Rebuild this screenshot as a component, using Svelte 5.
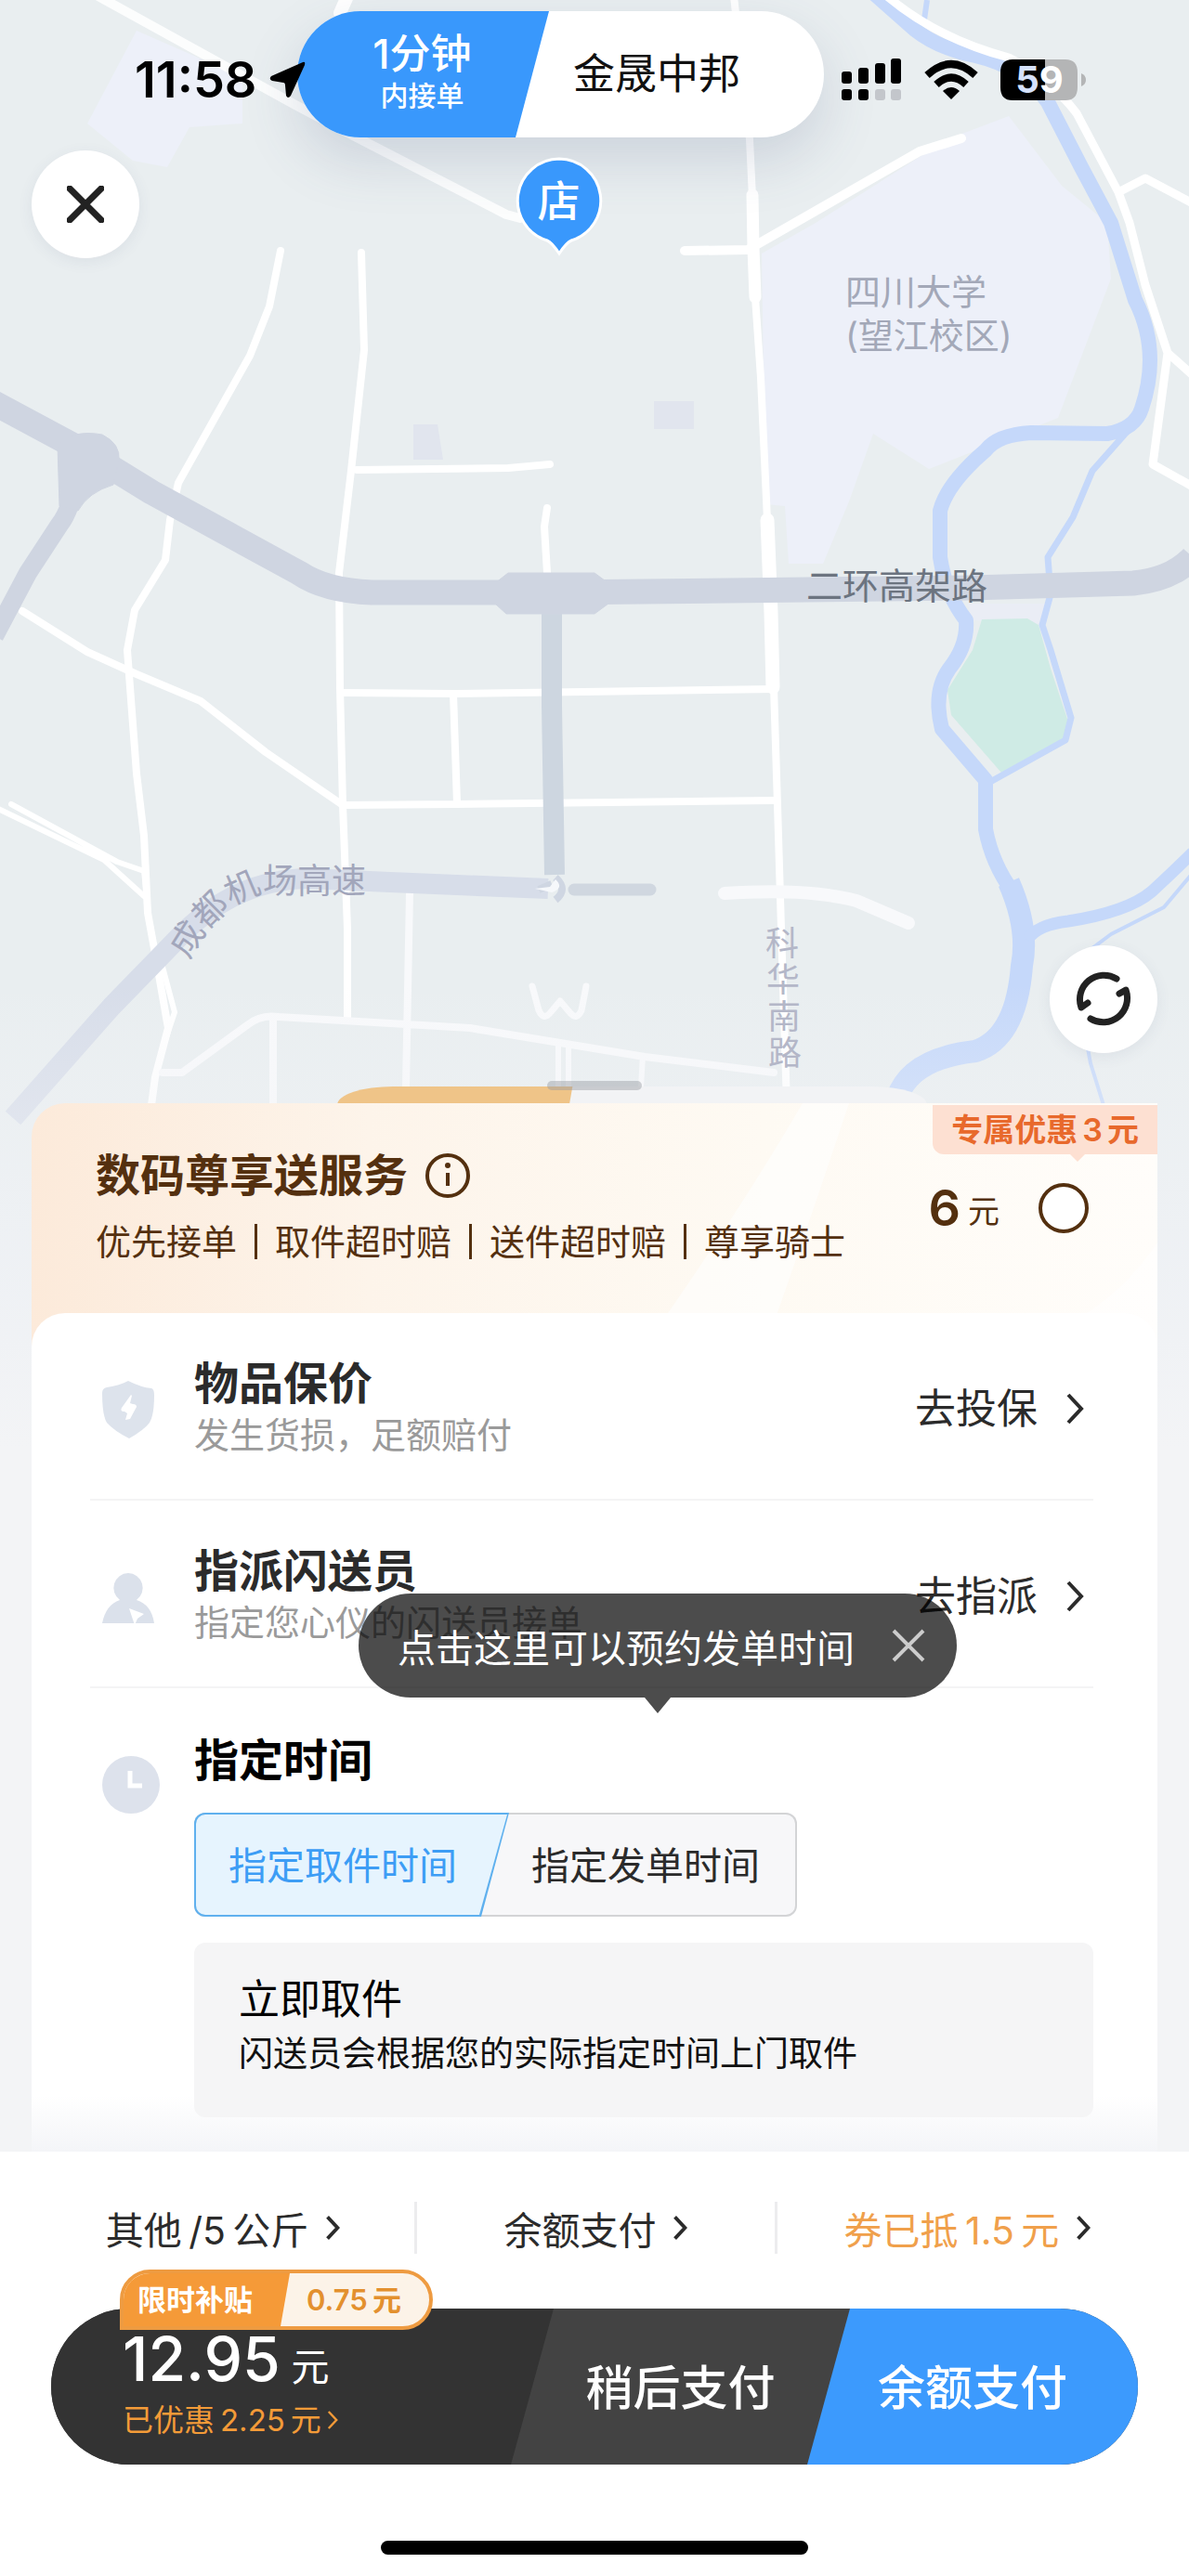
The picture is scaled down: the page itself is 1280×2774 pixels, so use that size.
<script lang="ts">
  interface ServiceRow {
    icon: 'shield' | 'courier';
    title: string;
    note: string;
    action: string;
  }

  const perks = ['优先接单', '取件超时赔', '送件超时赔', '尊享骑士'];

  const services: ServiceRow[] = [
    { icon: 'shield', title: '物品保价', note: '发生货损，足额赔付', action: '去投保' },
    { icon: 'courier', title: '指派闪送员', note: '指定您心仪的闪送员接单', action: '去指派' }
  ];

  const timeTabs = ['指定取件时间', '指定发单时间'];

  let activeTab = $state(0);
  let showTip = $state(true);
</script>

{#snippet chevron()}
  <svg class="chevron" viewBox="0 0 20 36" aria-hidden="true">
    <path d="M3 3 L17 18 L3 33" />
  </svg>
{/snippet}

<div class="page">
  <section class="stage">
    <svg class="map" viewBox="0 0 1280 1560" aria-hidden="true">
      <defs>
        <linearGradient id="fade" x1="0" y1="0" x2="0" y2="1">
          <stop offset="0" stop-color="#f3f4f7" stop-opacity="0" />
          <stop offset="0.6" stop-color="#f0f2f6" stop-opacity="0.75" />
          <stop offset="1" stop-color="#f3f4f6" />
        </linearGradient>
        <path id="airport" d="M203 1034 Q240 965 290 962 L420 962" />
      </defs>
      <rect width="1280" height="1560" fill="#e9eef0" />

      <!-- campus and blocks -->
      <g fill="#edf0f9">
        <path d="M820 273 L878 240 L1020 150 L1086 125 L1143 200 L1192 240 L1196 300 L1139 450 L1000 505 L940 467 L914 540 L886 607 L849 607 L845 545 L824 543 Z" />
        <path d="M147 33 L261 83 L261 133 L204 137 L180 180 L143 173 L94 133 Z" />
      </g>
      <path d="M704 432h43v30h-43z M445 457h26l6 38h-32z" fill="#e1e5ee" />
      <path d="M1042 650 L1126 650 L1120 672 L1046 668 Z" fill="#eaedf5" />
      <path d="M1057 667 L1106 666 L1118 673 L1131 720 L1150 777 L1145 797 L1078 832 L1024 770 L1020 743 L1047 700 Z" fill="#cfebe5" />

      <!-- river -->
      <g fill="none" stroke="#c5d8fa" stroke-linejoin="round">
        <path stroke-width="16" d="M942 -6 L985 32 Q1010 52 1050 60 Q1102 72 1128 110 L1164 180 L1196 240 L1222 323 Q1250 378 1229 440 Q1222 462 1192 467 L1110 466 Q1074 468 1061 485 Q1020 520 1012 550 L1012 600 Q1018 640 1040 668 Q1042 695 1022 720 Q1004 745 1014 785 L1061 840 L1061 893 Q1068 930 1090 960" />
        <path stroke-width="24" d="M1086 950 Q1108 1000 1100 1040 Q1094 1118 1050 1132 Q980 1140 966 1182" />
        <path stroke-width="7" d="M1222 455 L1176 507 L1155 557 L1128 600 L1131 640 L1122 673 L1131 700 L1153 773 L1147 797 L1066 842" />
        <path stroke-width="13" d="M1106 1012 Q1116 996 1150 992 Q1214 982 1240 960 Q1266 936 1284 918" />
        <path stroke-width="4" d="M1284 940 L1253 977 L1196 1006 L1172 1024 M1170 1124 L1174 1145 L1188 1190" />
        <path stroke-width="6" d="M998 0 L994 28" />
      </g>

      <!-- streets -->
      <g fill="none" stroke="#fff" stroke-width="8" stroke-linejoin="round" stroke-linecap="round">
        <path stroke-width="10" d="M106 -4 L318 113 L384 148 L545 231 L560 235" opacity="0.85" />
        <path stroke-width="14" d="M374 -4 L366 14" />
        <path stroke-width="8" d="M790 -4 L807 150 L810 213" />
        <path stroke-width="13" d="M810 210 L811 267 L813 320" />
        <path d="M813 320 L819 407 L826 560" />
        <path stroke-width="15" d="M826 560 L830 660 L832 740" />
        <path d="M833 740 L837 867 L841 1000 L847 1190" />
        <path stroke-width="10" d="M737 270 L805 269 L990 163 L1035 149" />
        <path stroke-width="9" d="M955 -4 Q1010 42 1086 62 Q1130 84 1159 122 L1204 207 L1216 240 L1233 307 L1257 380 L1241 500 L1284 524 M1257 380 L1284 404 M1204 207 L1233 192 L1284 219" />
        <path d="M302 270 L290 330 L269 383 L192 520 L183 560 L178 603 L145 657 L137 700 L147 833 L155 900 L159 983 L167 1027 L181 1107 L167 1160 L163 1190" />
        <path d="M389 272 L392 377 L378 507 L365 617 L366 740 L369 867 L374 1000 L374 1097" />
        <path d="M384 506 L547 504 L592 500 M589 547 L586 567 L589 617 M371 746 L490 747 L833 742 M371 867 L490 866 L833 862 M488 747 L492 865" />
        <path d="M24 658 L94 702 L147 726 L216 755 L286 810 L369 867" />
        <path stroke-width="6" d="M-4 870 L112 926 L155 965 M12 866 L126 928 L155 938 L160 985 M172 1030 L188 1090 L178 1120" />
        <g stroke="#f8f9fb">
          <path d="M175 1155 L196 1155 L266 1104 Q280 1092 300 1095 L506 1107 L694 1138 L833 1155 M294 1095 L294 1190 M441 962 L437 1170" />
          <path stroke-width="6" d="M601 1125 L601 1170 M612 1125 L612 1170 M692 1137 L690 1170" />
          <path stroke-width="14" d="M780 962 Q870 956 922 970 L978 994" />
          <path stroke-width="7" d="M573 1062 L580 1088 Q585 1099 592 1091 L603 1078 L614 1091 Q621 1099 626 1088 L631 1062" />
        </g>
      </g>

      <!-- elevated roads -->
      <g fill="none" stroke="#cfd5e1" stroke-linejoin="round">
        <path stroke-width="27" d="M-10 432 L98 490 L163 530 L322 617 Q350 636 400 638 L600 638 L1045 633 L1220 628 Q1262 624 1284 600" />
        <path stroke-width="20" d="M88 485 Q80 545 64 565 L30 617 L-6 685" />
        <path stroke-width="22" stroke="#cdd6e0" d="M594 650 L594 760 L597 942" />
        <path d="M62 480 Q78 462 110 468 Q130 478 128 496 L122 522 Q95 530 84 550 L64 545 Z" fill="#cfd5e1" />
        <path d="M547 617 L640 617 L655 628 L655 650 L640 661 L545 661 L533 650 L533 628 Z" fill="#cfd5e1" />
      </g>
      <g fill="none" stroke="#d7dde9" stroke-linejoin="round">
        <path stroke-width="22" d="M14 1204 L120 1084 L190 1012 Q250 948 330 946 L420 950 L590 957" />
        <path stroke-width="13" stroke="#d0d7e0" stroke-linecap="round" d="M618 958 L700 958" />
        <path d="M580 958 L594 952 M598 945 Q612 958 598 969" stroke="#cfd6e2" stroke-width="8" />
        <path d="M576 957 L592 955 L598 947 Q608 956 594 961 Z" fill="#f6f8fb" stroke="none" />
      </g>

      <rect y="1060" width="1280" height="500" fill="url(#fade)" />

      <g class="labels">
        <text x="910" y="328">四川大学</text>
        <text x="910" y="375">(望江校区)</text>
        <text class="strong" x="868" y="645">二环高架路</text>
        <text class="road"><textPath href="#airport">成都机场高速</textPath></text>
        <text class="soft" x="824 825 826 827" y="1029 1068 1108 1147">科华南路</text>
      </g>
    </svg>

    <div class="eta">
      <div class="eta-time">
        <strong>1分钟</strong>
        <span>内接单</span>
      </div>
      <div class="eta-place">金晟中邦</div>
    </div>

    <div class="pin">
      <svg viewBox="0 0 96 108" aria-hidden="true">
        <path d="M48 3 A45 45 0 0 1 61 91 Q56 93 48 105 Q40 93 35 91 A45 45 0 0 1 48 3 Z" fill="#3998fc" stroke="#fff" stroke-width="3" />
      </svg>
      <span>店</span>
    </div>

    <div class="status">
      <div class="status-left">
        <span class="clock">11:58</span>
        <svg class="arrow" viewBox="0 0 42 42" aria-hidden="true">
          <path d="M38 2 L4 17 Q1 20 5 22 L17 24 Q19 24 19 27 L20 38 Q22 42 25 38 L40 5 Q41 1 38 2 Z" />
        </svg>
      </div>
      <div class="status-right">
        <svg class="signal" viewBox="0 0 66 46" aria-hidden="true">
          <rect x="0" y="14" width="11" height="13" rx="3" />
          <rect x="18" y="10" width="11" height="17" rx="3" />
          <rect x="36" y="5" width="11" height="22" rx="3" />
          <rect x="53" y="0" width="11" height="27" rx="3" />
          <rect x="0" y="33" width="11" height="12" rx="3" />
          <rect x="18" y="33" width="11" height="12" rx="3" />
          <rect x="36" y="33" width="11" height="12" rx="3" fill="#c3c6cb" />
          <rect x="53" y="33" width="11" height="12" rx="3" fill="#c3c6cb" />
        </svg>
        <svg class="wifi" viewBox="0 0 58 44" aria-hidden="true">
          <path d="M3 17 Q29 -7 55 17" stroke-width="8" />
          <path d="M13 27 Q29 12 45 27" stroke-width="8" />
          <path d="M20 34 Q29 26 38 34 L29 43 Z" fill="#000" stroke="none" />
        </svg>
        <svg class="battery" viewBox="0 0 94 46" aria-hidden="true">
          <path d="M14 1 H49 V45 H14 Q1 45 1 31 V15 Q1 1 14 1 Z" />
          <path d="M49 1 H71 Q84 1 84 15 V31 Q84 45 71 45 H49 Z" fill="#b4b5b6" />
          <path d="M88 16 Q93 18 93 23 Q93 28 88 30 Z" fill="#b4b5b6" />
          <text x="43" y="37" text-anchor="middle"><tspan fill="#d5e1fb">5</tspan><tspan fill="#fff">9</tspan></text>
        </svg>
      </div>
    </div>

    <button class="round close" aria-label="关闭">
      <svg viewBox="0 0 40 40" aria-hidden="true"><path d="M3 3 L37 37 M37 3 L3 37" /></svg>
    </button>

    <button class="round refresh" aria-label="刷新">
      <svg viewBox="0 0 60 60" aria-hidden="true">
        <path d="M44 8 A26 26 0 0 0 6 39 L13 34" />
        <path d="M16 51 A26 26 0 0 0 54 20 L47 24" />
      </svg>
    </button>

    <div class="peek"></div>
    <div class="handle"></div>
  </section>

  <main class="sheet">
    <section class="promo">
      <svg class="shine" viewBox="0 0 1212 262" preserveAspectRatio="none" aria-hidden="true">
        <path d="M830 0 H880 Q830 150 790 262 H660 Q760 120 830 0 Z" />
        <path d="M1212 150 V262 H1050 Q1150 240 1212 150 Z" />
      </svg>
      <div class="promo-badge">专属优惠<b>3</b>元</div>
      <div class="promo-info">
        <h2>
          数码尊享送服务
          <svg viewBox="0 0 50 50" aria-hidden="true">
            <circle cx="25" cy="25" r="22" />
            <path d="M25 22 V36" />
            <circle class="dot" cx="25" cy="14" r="3" />
          </svg>
        </h2>
        <ul>
          {#each perks as perk}
            <li>{perk}</li>
          {/each}
        </ul>
      </div>
      <label class="promo-price">
        <b>6</b>
        <span>元</span>
        <input type="radio" name="premium" />
      </label>
    </section>

    <section class="card">
      {#each services as row}
        <div class="row">
          <div class="icon">
            {#if row.icon === 'shield'}
              <svg viewBox="0 0 64 64" aria-hidden="true">
                <path d="M29 1 Q43 8 54 9 Q57 10 57 16 Q57 38 52 46 Q46 54 30 63 Q14 55 6 46 Q1 38 1 14 Q1 9 6 8 Q20 6 29 1 Z" fill="#dde3ec" />
                <path d="M32 16 L22 30 Q20 34 25 34 L28 36 L26 43 L31 42 L38 29 Q38 26 34 26 L31 25 L33 17 Z" fill="#fff" />
              </svg>
            {:else}
              <svg viewBox="0 0 64 64" aria-hidden="true">
                <path d="M29 6 A16 16 0 0 1 38 35 Q54 40 57 60 H1 Q5 40 20 35 A16 16 0 0 1 29 6 Z" fill="#dbe1eb" />
                <path d="M30 44 L46 50 L39 55 L36 62 Z" fill="#fff" />
              </svg>
            {/if}
          </div>
          <div class="row-text">
            <h3>{row.title}</h3>
            <p>{row.note}</p>
          </div>
          <button class="row-action">
            {row.action}
            {@render chevron()}
          </button>
        </div>
      {/each}

      <div class="row time-row">
        <div class="icon">
          <svg viewBox="0 0 64 64" aria-hidden="true">
            <circle cx="32" cy="32" r="31" fill="#dde2ec" />
            <path d="M31 17 V33 H44" fill="none" stroke="#fff" stroke-width="5" />
          </svg>
        </div>
        <div class="row-text">
          <h3>指定时间</h3>
          <div class="tabs">
            {#each timeTabs as tab, i}
              <button class:active={activeTab === i} onclick={() => (activeTab = i)}>{tab}</button>
            {/each}
          </div>
          <div class="pickup">
            <h4>立即取件</h4>
            <p>闪送员会根据您的实际指定时间上门取件</p>
          </div>
        </div>

        {#if showTip}
          <div class="tip">
            <span>点击这里可以预约发单时间</span>
            <button aria-label="关闭提示" onclick={() => (showTip = false)}>
              <svg viewBox="0 0 36 36" aria-hidden="true"><path d="M2 2 L34 34 M34 2 L2 34" /></svg>
            </button>
          </div>
        {/if}
      </div>
    </section>
  </main>

  <footer class="checkout">
    <div class="options">
      <button>其他&thinsp;/5&thinsp;公斤 {@render chevron()}</button>
      <button>余额支付 {@render chevron()}</button>
      <button class="coupon"><span>券已抵&thinsp;1.5&thinsp;元</span> {@render chevron()}</button>
    </div>

    <div class="bar">
      <div class="total">
        <div class="subsidy">
          <span class="subsidy-name">限时补贴</span>
          <span class="subsidy-sum">0.75&thinsp;元</span>
        </div>
        <div class="sum"><b>12.95</b> 元</div>
        <a class="saved" href="#discount">已优惠&thinsp;2.25&thinsp;元{@render chevron()}</a>
      </div>
      <button class="later">稍后支付</button>
      <button class="pay">余额支付</button>
    </div>

    <div class="home"></div>
  </footer>
</div>

<style>
  :global(body) {
    background: #f3f4f6;
  }

  .page {
    position: relative;
    overflow: hidden;
    font-family: Inter, 'Noto Sans CJK SC', sans-serif;
    color: #2b2b2b;
  }

  .page :is(h2, h3, h4, p, ul) {
    margin: 0;
    padding: 0;
  }

  button {
    border: 0;
    padding: 0;
    background: none;
    font: inherit;
    color: inherit;
    cursor: pointer;
  }

  svg {
    display: block;
  }

  .chevron {
    width: 20px;
    height: 36px;
    fill: none;
    stroke: #2b2b2b;
    stroke-width: 4;
  }

  /* map */
  .stage {
    position: relative;
    aspect-ratio: 1280 / 1188;
  }

  .map {
    position: absolute;
    top: 0;
    left: 0;
    width: 100%;
  }

  .labels {
    font-size: 38px;
    fill: #a3a8b8;
  }

  .labels .strong {
    font-size: 39px;
    fill: #6c7480;
  }

  .labels .road {
    font-size: 37px;
    fill: #a2a6bb;
  }

  .labels .soft {
    font-size: 36px;
    fill: #b4b7c8;
  }

  .status {
    position: absolute;
    top: 56px;
    left: 0;
    right: 0;
    display: flex;
    justify-content: space-between;
    align-items: center;
    height: 60px;
    padding: 0 110px 0 145px;
  }

  .status-left,
  .status-right {
    display: flex;
    align-items: center;
  }

  .status-left {
    gap: 12px;
  }

  .status-right {
    gap: 23px;
  }

  .clock {
    font-size: 54px;
    font-weight: 600;
    line-height: 60px;
    color: #000;
  }

  .arrow {
    width: 42px;
    height: 42px;
  }

  .signal {
    width: 66px;
    height: 46px;
  }

  .wifi {
    width: 58px;
    height: 44px;
    fill: none;
    stroke: #000;
  }

  .battery {
    width: 94px;
    height: 46px;
    overflow: visible;
    font-size: 40px;
    font-weight: 700;
  }

  .eta {
    position: absolute;
    top: 12px;
    left: 25%;
    display: flex;
    height: 136px;
    border-radius: 68px;
    background: #fff;
    box-shadow: 0 24px 60px rgba(70, 90, 130, 0.18);
  }

  .eta-time {
    display: flex;
    flex-direction: column;
    align-items: center;
    justify-content: center;
    width: 271px;
    padding: 0 2px 4px 0;
    box-sizing: border-box;
    border-radius: 68px 0 0 68px;
    background: #3998fc;
    color: #fff;
    clip-path: polygon(0 0, 100% 0, calc(100% - 36px) 100%, 0 100%);
  }

  .eta-time strong {
    font-size: 44px;
    font-weight: 500;
    line-height: 50px;
  }

  .eta-time span {
    font-size: 30px;
    font-weight: 500;
    line-height: 40px;
  }

  .eta-place {
    padding: 0 90px 0 26px;
    font-size: 45px;
    line-height: 136px;
    color: #111;
  }

  .pin {
    position: absolute;
    top: 168px;
    left: 47%;
    width: 96px;
    margin-left: -48px;
    color: #fff;
    font-size: 46px;
    font-weight: 500;
    line-height: 96px;
    text-align: center;
  }

  .pin svg {
    position: absolute;
    top: 0;
    left: 0;
    width: 96px;
    height: 108px;
  }

  .pin span {
    position: relative;
  }

  .round {
    position: absolute;
    display: flex;
    align-items: center;
    justify-content: center;
    width: 116px;
    height: 116px;
    border-radius: 50%;
    background: #fff;
    box-shadow: 0 4px 16px rgba(60, 80, 110, 0.08);
  }

  .round svg {
    fill: none;
    stroke: #222;
    stroke-width: 7;
    stroke-linecap: round;
    stroke-linejoin: round;
  }

  .close {
    top: 162px;
    left: 34px;
  }

  .close svg {
    width: 40px;
    height: 40px;
  }

  .refresh {
    right: 34px;
    bottom: 54px;
  }

  .refresh svg {
    width: 60px;
    height: 60px;
  }

  .peek {
    position: absolute;
    right: 22%;
    bottom: -2px;
    left: 363px;
    height: 20px;
    border-radius: 60px 60px 0 0 / 20px 20px 0 0;
    background: linear-gradient(100deg, #efc488 249px, #f2f3f5 250px);
  }

  .handle {
    position: absolute;
    bottom: 14px;
    left: 50%;
    width: 102px;
    height: 10px;
    margin-left: -51px;
    border-radius: 5px;
    background: rgba(150, 156, 162, 0.45);
  }

  /* sheet */
  .sheet {
    position: relative;
    margin: 0 34px;
  }

  .promo {
    position: relative;
    display: flex;
    justify-content: space-between;
    align-items: flex-start;
    padding: 46px 74px 84px 69px;
    border-radius: 36px 0 0 0;
    background: linear-gradient(90deg, #fceada 0%, #fdf4ea 30%, #fefaf3 65%, #fffdfa 100%);
    color: #54300f;
  }

  .shine {
    position: absolute;
    inset: 0;
    width: 100%;
    height: 100%;
    fill: #fff;
    opacity: 0.6;
  }

  .promo-badge {
    position: absolute;
    top: 2px;
    right: 0;
    padding: 0 20px;
    border-radius: 0 0 0 12px;
    background: #fde0d2;
    color: #e8692c;
    font-size: 34px;
    font-weight: 700;
    line-height: 53px;
  }

  .promo-badge b {
    margin: 0 5px;
    font-weight: 600;
  }

  .promo-badge::after {
    content: '';
    position: absolute;
    top: 100%;
    right: 78px;
    border: 8px solid transparent;
    border-top-color: #fde0d2;
    border-bottom: 0;
  }

  .promo-info,
  .promo-price {
    position: relative;
  }

  .promo-info h2 {
    display: flex;
    align-items: center;
    gap: 18px;
    font-size: 48px;
    font-weight: 700;
    line-height: 64px;
  }

  .promo-info h2 svg {
    width: 50px;
    height: 50px;
    fill: none;
    stroke: #54300f;
    stroke-width: 4;
  }

  .promo-info .dot {
    fill: #54300f;
    stroke: none;
  }

  .promo-info ul {
    display: flex;
    margin-top: 10px;
    list-style: none;
    font-size: 38px;
    line-height: 58px;
  }

  .promo-info li + li {
    display: flex;
    align-items: center;
  }

  .promo-info li + li::before {
    content: '';
    width: 3px;
    height: 38px;
    margin: 0 19px;
    background: #54300f;
  }

  .promo-price {
    display: flex;
    align-items: center;
    margin-top: 37px;
    line-height: 60px;
  }

  .promo-price b {
    font-size: 54px;
    font-weight: 600;
  }

  .promo-price span {
    margin: 8px 42px 0 8px;
    font-size: 34px;
    line-height: 52px;
  }

  .promo-price input {
    appearance: none;
    width: 54px;
    height: 54px;
    margin: 0;
    border: 4px solid #54300f;
    border-radius: 50%;
    background: #fff;
  }

  .promo-price input:checked {
    box-shadow: inset 0 0 0 10px #fff;
    background: #54300f;
  }

  .card {
    position: relative;
    margin-top: -36px;
    padding: 0 69px 37px 63px;
    border-radius: 36px 36px 0 0;
    background: linear-gradient(to top, #f4f5f8, #fff 60px);
  }

  .row {
    position: relative;
    display: flex;
    align-items: flex-start;
    padding: 48px 0 42px 12px;
    border-bottom: 2px solid #f4f4f5;
  }

  .icon {
    width: 64px;
    margin-top: 24px;
  }

  .icon svg {
    width: 64px;
    height: 64px;
  }

  .row-text {
    flex: 1;
    margin-left: 36px;
  }

  .row h3 {
    font-size: 48px;
    font-weight: 700;
    line-height: 56px;
  }

  .row-text > p {
    font-size: 38px;
    line-height: 54px;
    color: #9a9a9a;
  }

  .row-action {
    display: flex;
    align-items: center;
    gap: 30px;
    margin-right: 10px;
    font-size: 44px;
    line-height: 110px;
  }

  .time-row {
    padding-bottom: 0;
    border-bottom: 0;
  }

  .time-row h3 {
    margin-top: 2px;
    color: #000;
  }

  .tabs {
    display: flex;
    width: fit-content;
    margin-top: 28px;
    border-radius: 12px;
    background: #f7f7f9;
    box-shadow: inset 0 0 0 2px #d3d4d6;
  }

  .tabs button {
    position: relative;
    z-index: 0;
    height: 112px;
    padding: 0 56px 4px 37px;
    font-size: 41px;
  }

  .tabs button + button {
    margin-left: -30px;
    padding: 0 40px 4px 54px;
  }

  .tabs .active {
    border-radius: 12px 0 0 12px;
    background: #5fb0ee;
    color: #3d9df5;
    clip-path: polygon(0 0, 100% 0, calc(100% - 30px) 100%, 0 100%);
  }

  .tabs .active::before {
    content: '';
    position: absolute;
    z-index: -1;
    inset: 2px;
    border-radius: 10px 0 0 10px;
    background: #e6f4fe;
    clip-path: polygon(0 0, 100% 0, calc(100% - 30px) 100%, 0 100%);
  }

  .tabs button + .active {
    border-radius: 0 12px 12px 0;
    clip-path: polygon(30px 0, 100% 0, 100% 100%, 0 100%);
  }

  .tabs button + .active::before {
    border-radius: 0 10px 10px 0;
    clip-path: polygon(30px 0, 100% 0, 100% 100%, 0 100%);
  }

  .pickup {
    padding: 29px 48px 41px;
    margin-top: 28px;
    border-radius: 12px;
    background: #f5f5f6;
    color: #111;
  }

  .pickup h4 {
    font-size: 44px;
    font-weight: 400;
    line-height: 64px;
    color: #000;
  }

  .pickup p {
    font-size: 37px;
    line-height: 54px;
  }

  .tip {
    position: absolute;
    top: -102px;
    left: 289px;
    display: flex;
    align-items: center;
    gap: 40px;
    height: 112px;
    padding: 0 34px 0 42px;
    border-radius: 56px;
    background: rgba(0, 0, 0, 0.7);
    color: #fff;
    font-size: 41px;
    white-space: nowrap;
  }

  .tip::after {
    content: '';
    position: absolute;
    top: 100%;
    left: 50%;
    margin-left: -14px;
    border: 14px solid transparent;
    border-top: 17px solid rgba(0, 0, 0, 0.7);
    border-bottom: 0;
  }

  .tip svg {
    width: 36px;
    height: 36px;
    fill: none;
    stroke: #ccc;
    stroke-width: 4;
  }

  /* checkout */
  .checkout {
    position: relative;
    padding: 54px 55px 24px;
    background: #fff;
  }

  .options {
    display: grid;
    grid-template-columns: 17fr 16fr 17fr;
    margin: 0 -21px 59px;
  }

  .options button {
    display: flex;
    align-items: center;
    justify-content: center;
    gap: 18px;
    height: 56px;
    font-size: 41px;
  }

  .options button + button {
    border-left: 3px solid #ececee;
  }

  .options .coupon span {
    color: #f0a04b;
  }

  .options button :global(.chevron) {
    width: 16px;
    height: 28px;
    stroke-width: 5;
  }

  .bar {
    display: grid;
    grid-template-columns: minmax(0, 541fr) minmax(0, 319fr) minmax(0, 310fr);
    height: 168px;
    border-radius: 84px;
    background: #434343;
    color: #fff;
  }

  .total {
    position: relative;
    padding: 19px 0 0 77px;
    z-index: 0;
  }

  .total::before {
    content: '';
    position: absolute;
    z-index: -1;
    inset: 0;
    border-radius: 84px 0 0 84px;
    background: #333;
    clip-path: polygon(0 0, 100% 0, calc(100% - 46px) 100%, 0 100%);
  }

  .subsidy {
    position: absolute;
    top: -42px;
    left: 74px;
    display: flex;
    border: 4px solid #ee9b41;
    border-radius: 34px 34px 34px 0;
    background: #fcf3e8;
    font-size: 31px;
    font-weight: 700;
    line-height: 57px;
    overflow: hidden;
  }

  .subsidy-name {
    padding: 0 40px 0 15px;
    background: #f59a38;
    clip-path: polygon(0 0, 100% 0, calc(100% - 10px) 100%, 0 100%);
  }

  .subsidy-sum {
    padding: 0 30px 0 18px;
    color: #e3902e;
    font-weight: 600;
  }

  .sum {
    font-size: 41px;
    line-height: 70px;
  }

  .sum b {
    font-size: 66px;
    font-weight: 500;
  }

  .saved {
    display: flex;
    align-items: center;
    gap: 6px;
    width: fit-content;
    font-size: 33px;
    line-height: 44px;
    color: #f39b38;
    text-decoration: none;
  }

  .saved :global(.chevron) {
    width: 12px;
    height: 22px;
    stroke: #f39b38;
  }

  .later,
  .pay {
    margin-left: -46px;
    padding-bottom: 4px;
    font-size: 51px;
    font-weight: 500;
  }

  .pay {
    border-radius: 0 84px 84px 0;
    background: #3c9afd;
    clip-path: polygon(46px 0, 100% 0, 100% 100%, 0 100%);
  }

  .home {
    width: 460px;
    height: 15px;
    margin: 82px auto 0;
    border-radius: 8px;
    background: #000;
  }
</style>
